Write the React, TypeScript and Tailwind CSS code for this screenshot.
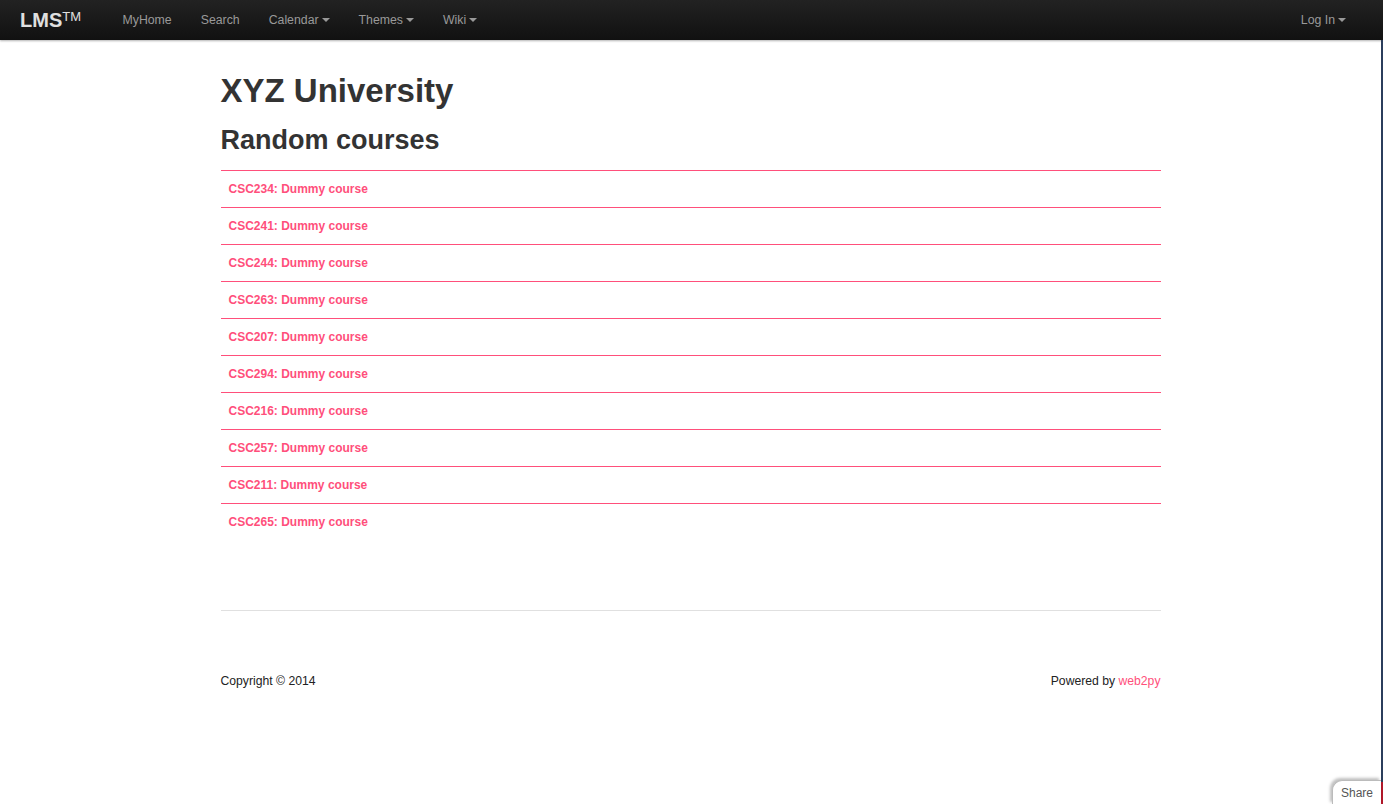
import React from 'react';

const courses = [
  'CSC234',
  'CSC241',
  'CSC244',
  'CSC263',
  'CSC207',
  'CSC294',
  'CSC216',
  'CSC257',
  'CSC211',
  'CSC265',
];

function Caret() {
  return <span className="ml-[3px] inline-block h-0 w-0 border-x-[4px] border-t-[4px] border-x-transparent border-t-[#999] align-middle" />;
}

const navItems = [
  { label: 'MyHome', caret: false },
  { label: 'Search', caret: false },
  { label: 'Calendar', caret: true },
  { label: 'Themes', caret: true },
  { label: 'Wiki', caret: true },
];

export default function App() {
  return (
    <div className="relative min-h-[804px] bg-white font-['Liberation_Sans',Arial,sans-serif] text-[12px] text-[#333]">
      {/* Navbar */}
      <div className="flex h-10 items-center bg-gradient-to-b from-[#222222] to-[#111111] pr-[37px] shadow-[0_1px_2px_rgba(0,0,0,0.3)]">
        <div className="ml-5 mr-[27px] text-[20px] font-bold leading-none text-[#e0e0e0]">
          LMS<span className="relative -top-[6px] text-[13px] font-normal">TM</span>
        </div>
        <nav className="flex">
          {navItems.map((n) => (
            <a key={n.label} className="flex items-center px-[14.5px] text-[12.3px] text-[#999]">
              {n.label}
              {n.caret && <Caret />}
            </a>
          ))}
        </nav>
        <a className="ml-auto flex items-center text-[12.3px] text-[#999]">
          Log In
          <Caret />
        </a>
      </div>

      {/* Main */}
      <div className="mr-[2px]">
        <div className="mx-auto w-[940px] pt-[26px]">
          <h1 className="text-[33px] font-bold leading-[50px] text-[#333]">XYZ University</h1>
          <h2 className="mt-[4px] text-[27px] font-bold leading-[40px] text-[#333]">Random courses</h2>
          <div className="mt-[10px]">
            {courses.map((c) => (
              <div key={c} className="border-t border-[#ff4f7b] px-2 py-2 leading-5">
                <a className="text-[12px] font-bold text-[#ff4f7b]">{c}: Dummy course</a>
              </div>
            ))}
          </div>
          <div className="mt-[70px] border-t border-[#e0e0e0]" />
          <div className="mt-[60px] flex justify-between text-[12.2px] leading-5 text-[#222]">
            <span>Copyright © 2014</span>
            <span>
              Powered by <a className="text-[#ff4f7b]">web2py</a>
            </span>
          </div>
        </div>
      </div>

      {/* right edge strip */}
      <div className="absolute right-0 top-10 h-[742px] w-[2px] bg-[#2b3e5c]" />
      <div className="absolute bottom-0 right-0 h-[22px] w-[2px] bg-[#b0182a]" />

      {/* Share tab */}
      <div className="absolute bottom-0 right-[2px] rounded-tl-[10px] border-l border-t border-[#bbb] bg-white px-2 pt-[4px] pb-[3px] text-[12px] leading-4 text-[#555] shadow-[-2px_-2px_3px_rgba(0,0,0,0.25)]">
        Share
      </div>
    </div>
  );
}
